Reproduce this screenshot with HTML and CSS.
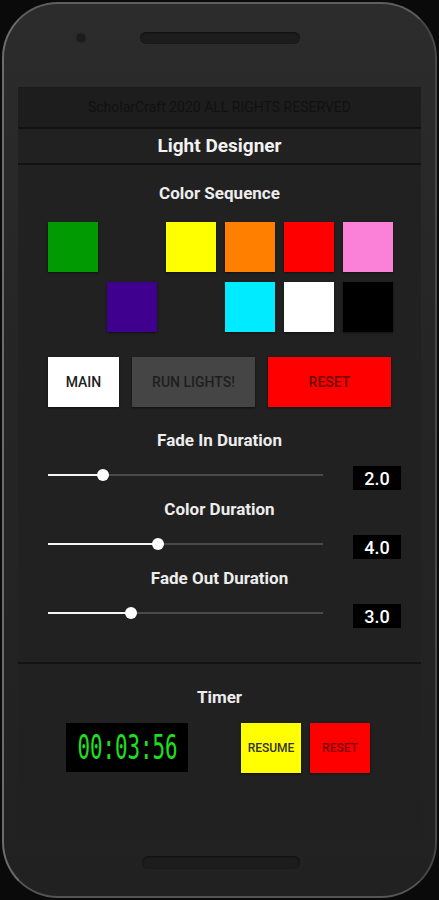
FILE: index.html
```html
<!DOCTYPE html>
<html lang="en">
<head>
    <meta charset="UTF-8">
    <meta name="viewport" content="width=device-width, initial-scale=1.0">
    <title>Light Designer</title>
    <link rel="stylesheet" href="styles.css">
</head>
<body>
    <div class="phone">
        <div class="earpiece">
            <span class="camera"></span>
            <span class="grille"></span>
        </div>

        <div class="screen">
            <div class="copyright">ScholarCraft 2020 ALL RIGHTS RESERVED</div>
            <h1 class="title">Light Designer</h1>

            <h2 class="label">Color Sequence</h2>
            <div class="swatches">
                <div class="swatch green"></div>
                <div class="swatch empty"></div>
                <div class="swatch yellow"></div>
                <div class="swatch orange"></div>
                <div class="swatch red"></div>
                <div class="swatch pink"></div>
                <div class="swatch empty"></div>
                <div class="swatch purple"></div>
                <div class="swatch empty"></div>
                <div class="swatch cyan"></div>
                <div class="swatch white"></div>
                <div class="swatch black"></div>
            </div>

            <div class="actions">
                <button class="btn btn-main">MAIN</button>
                <button class="btn btn-run">RUN LIGHTS!</button>
                <button class="btn btn-reset">RESET</button>
            </div>

            <div class="sliders" id="sliders"></div>

            <div class="divider"></div>

            <h2 class="label timer-label">Timer</h2>
            <div class="timer-row">
                <div class="clock"><span>00:03:56</span></div>
                <button class="btn btn-resume">RESUME</button>
                <button class="btn btn-stop">RESET</button>
            </div>
        </div>

        <div class="grille grille-bottom"></div>
    </div>

    <script>
        const settings = [
            { name: "Fade In Duration", value: 2.0 },
            { name: "Color Duration", value: 4.0 },
            { name: "Fade Out Duration", value: 3.0 }
        ];
        const maxSeconds = 10;
        const sliders = document.getElementById("sliders");

        settings.forEach(s => {
            const pct = (s.value / maxSeconds) * 100;
            const div = document.createElement("div");
            div.className = "slider-block";
            div.innerHTML = `
                <h2 class="label slider-label">${s.name}</h2>
                <div class="slider-row">
                    <div class="track">
                        <div class="fill" style="width: ${pct}%"></div>
                        <div class="thumb" style="left: ${pct}%"></div>
                    </div>
                    <div class="value">${s.value.toFixed(1)}</div>
                </div>
            `;
            sliders.appendChild(div);
        });
    </script>
</body>
</html>
```

FILE: styles.css
```css
/* General Styles */
body {
    margin: 0;
    height: 900px;
    overflow: hidden;
    background: #0a0a0a;
    font-family: Roboto, "Liberation Sans", sans-serif;
}

.phone {
    box-sizing: border-box;
    width: 435px;
    height: 896px;
    margin: 2px auto 0;
    border: 2px solid;
    border-color: #5e5e5e #474747 #555 #6c6c6c;
    border-radius: 56px;
    background: linear-gradient(#2c2c2c, #252525 40%, #212121);
}

/* Earpiece */
.earpiece {
    display: flex;
    align-items: center;
    height: 12px;
    padding-top: 28px;
}

.camera {
    width: 8px;
    height: 8px;
    margin-left: 73px;
    border-radius: 50%;
    background: #1c1c1c;
    box-shadow: 0 0 2px #111;
}

.grille {
    display: block;
    width: 160px;
    height: 12px;
    margin-left: 55px;
    border-radius: 6px;
    background: #1c1c1c;
    box-shadow: inset 0 1px 2px #101010;
}

.grille-bottom {
    width: 158px;
    height: 13px;
    margin: 19px 0 0 138px;
}

/* Screen */
.screen {
    height: 750px;
    margin: 43px 14px 0;
    background: #212121;
}

.copyright {
    height: 40px;
    line-height: 40px;
    text-align: center;
    font-size: 14px;
    color: #111;
    background: #1d1d1d;
    border-bottom: 2px solid #121212;
}

.title {
    margin: 0;
    height: 34px;
    line-height: 34px;
    text-align: center;
    font-size: 19px;
    font-weight: 700;
    color: #f2f2f2;
    border-bottom: 2px solid #121212;
}

.label {
    margin: 18px 0 0;
    line-height: 20px;
    text-align: center;
    font-size: 17px;
    font-weight: 700;
    color: #ededed;
}

/* Colors */
.swatches {
    display: grid;
    grid-template-columns: repeat(6, 50px);
    grid-auto-rows: 50px;
    gap: 10px 9px;
    margin-top: 19px;
    padding-left: 30px;
}

.swatch {
    box-shadow: 0 1px 2px rgba(0, 0, 0, 0.5);
}

.swatch.empty { box-shadow: none; }
.green { background: #029a02; }
.yellow { background: #ffff00; }
.orange { background: #ff8000; }
.red { background: #ff0000; }
.pink { background: #fb80d8; }
.purple { background: #3f0090; }
.cyan { background: #00ebff; }
.white { background: #ffffff; }
.black { background: #000000; }

/* Buttons */
.btn {
    border: none;
    padding: 0;
    font-family: Roboto, "Liberation Sans", sans-serif;
    font-size: 14px;
    font-weight: 500;
    color: #222;
    cursor: pointer;
    box-shadow: 0 1px 2px rgba(0, 0, 0, 0.6);
}

.actions {
    display: flex;
    gap: 13px;
    margin-top: 25px;
    padding-left: 30px;
}

.actions .btn {
    height: 50px;
    width: 123px;
}

.actions .btn-main {
    width: 71px;
    background: #fff;
}

.btn-run {
    background: #454545;
    color: #1e1e1e;
}

.btn-reset {
    background: #ff0000;
    color: #6e0000;
}

/* Sliders */
.sliders {
    margin-top: 23px;
}

.slider-block + .slider-block .slider-label {
    margin-top: 9px;
}

.slider-label {
    margin-top: 0;
}

.slider-row {
    display: flex;
    align-items: flex-start;
    height: 24px;
    margin-top: 16px;
    padding-left: 30px;
}

.track {
    position: relative;
    width: 275px;
    height: 2px;
    margin-top: 8px;
    background: #4a4a4a;
}

.fill {
    height: 2px;
    background: #f5f5f5;
}

.thumb {
    position: absolute;
    top: -5px;
    width: 12px;
    height: 12px;
    margin-left: -6px;
    border-radius: 50%;
    background: #fff;
}

.value {
    width: 48px;
    height: 24px;
    margin-left: 30px;
    line-height: 25px;
    text-align: center;
    font-size: 18px;
    font-weight: 500;
    color: #fff;
    background: #000;
}

.divider {
    height: 2px;
    margin-top: 34px;
    background: #131313;
}

/* Timer */
.timer-label {
    margin-top: 23px;
}

.timer-row {
    display: flex;
    align-items: flex-start;
    margin-top: 16px;
    padding-left: 48px;
}

.clock {
    display: flex;
    align-items: center;
    justify-content: center;
    width: 122px;
    height: 49px;
    margin-right: 53px;
    background: #000;
    overflow: hidden;
}

.clock span {
    display: inline-block;
    font-family: "DejaVu Sans Mono", monospace;
    font-size: 33px;
    color: #1ee01e;
    transform: scaleX(0.63);
}

.timer-row .btn {
    width: 60px;
    height: 50px;
    font-size: 12px;
}

.btn-resume {
    background: #ffff00;
    color: #333;
    margin-right: 9px;
}

.btn-stop {
    background: #ff0000;
    color: #7a0000;
}
```
